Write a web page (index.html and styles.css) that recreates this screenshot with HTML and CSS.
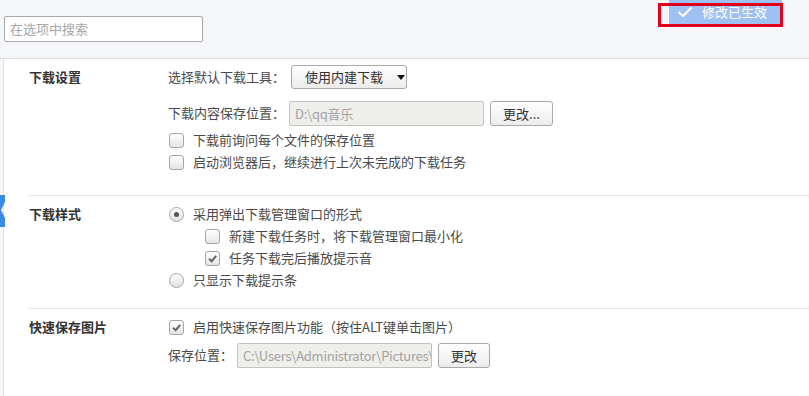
FILE: index.html
```html
<!DOCTYPE html>
<html lang="zh-CN">
<head>
<meta charset="utf-8">
<title>下载设置</title>
<link rel="stylesheet" href="styles.css">
</head>
<body>
<div class="topbar">
  <div class="search">在选项中搜索</div>
</div>
<div class="toast">
  <svg class="toast-check" width="16" height="12" viewBox="0 0 16 12"><path d="M1.5 6 L6 10 L14.5 1.5" fill="none" stroke="#fff" stroke-width="2.2"/></svg>
  <span>修改已生效</span>
</div>
<div class="redframe"></div>

<div class="main">
  <div class="sidebar">
    <svg class="indicator" width="6" height="32" viewBox="0 0 6 32"><path d="M0 0 H5 V7 L1 15 L5 23 V32 H0 Z" fill="#3b8be6"/></svg>
  </div>
  <div class="content">
    <div class="section s1">
      <div class="label">下载设置</div>
      <div class="body">
        <div class="row r24">
          <span>选择默认下载工具<span class="p">：</span></span>
          <span class="select">使用内建下载<i class="caret"></i></span>
        </div>
        <div class="row r26 gap11">
          <span>下载内容保存位置<span class="p">：</span></span>
          <span class="field f1">D:\qq音乐</span>
          <span class="btn b1">更改...</span>
        </div>
        <div class="row gap3"><span class="cb"></span><span>下载前询问每个文件的保存位置</span></div>
        <div class="row"><span class="cb"></span><span>启动浏览器后<span class="p">，</span>继续进行上次未完成的下载任务</span></div>
      </div>
    </div>

    <div class="section s2">
      <div class="label">下载样式</div>
      <div class="body">
        <div class="row"><span class="radio on"></span><span>采用弹出下载管理窗口的形式</span></div>
        <div class="row sub"><span class="cb"></span><span>新建下载任务时<span class="p">，</span>将下载管理窗口最小化</span></div>
        <div class="row sub"><span class="cb on"><svg width="13" height="13" viewBox="0 0 13 13"><path d="M3 6.8 L5.6 9.2 L10.2 3.8" fill="none" stroke="#666" stroke-width="2"/></svg></span><span>任务下载完后播放提示音</span></div>
        <div class="row"><span class="radio"></span><span>只显示下载提示条</span></div>
      </div>
    </div>

    <div class="section s3">
      <div class="label">快速保存图片</div>
      <div class="body">
        <div class="row"><span class="cb on"><svg width="13" height="13" viewBox="0 0 13 13"><path d="M3 6.8 L5.6 9.2 L10.2 3.8" fill="none" stroke="#666" stroke-width="2"/></svg></span><span>启用快速保存图片功能<span class="p">（</span>按住ALT键单击图片<span class="p">）</span></span></div>
        <div class="row r26 gap4">
          <span>保存位置<span class="p">：</span></span>
          <span class="field f2">C:\Users\Administrator\Pictures\</span>
          <span class="btn b2">更改</span>
        </div>
      </div>
    </div>
  </div>
</div>
</body>
</html>
```

FILE: styles.css
```css
html, body {
  margin: 0;
  padding: 0;
  background: #fff;
}
body {
  font-family: "Noto Sans CJK SC", "Microsoft YaHei", sans-serif;
  font-size: 13px;
  color: #4a4a4a;
  line-height: 22px;
  overflow: hidden;
  height: 396px;
}
.p {
  font-family: "Noto Sans CJK TC", "Noto Sans CJK SC", sans-serif;
}

.topbar {
  height: 59px;
  box-sizing: border-box;
  background: #f5f6fa;
  border-bottom: 1px solid #dadbdf;
  padding: 16px 0 0 4px;
}
.search {
  width: 199px;
  height: 26px;
  box-sizing: border-box;
  border: 1px solid #a9a9ab;
  border-radius: 2px;
  background: #fff;
  color: #a8a8a8;
  padding-left: 5px;
  line-height: 24px;
}

.toast {
  position: absolute;
  left: 669px;
  top: 0;
  width: 113px;
  height: 24px;
  background: #9fc0f3;
  color: #fff;
  display: flex;
  align-items: center;
  box-sizing: border-box;
  padding-left: 8px;
}
.toast-check {
  margin-right: 9px;
}
.redframe {
  position: absolute;
  left: 658px;
  top: 3px;
  width: 125px;
  height: 24px;
  box-sizing: border-box;
  border: 3px solid #e0001b;
}

.main {
  display: flex;
  height: 337px;
}
.sidebar {
  width: 3px;
  background: #f5f6fa;
  border-right: 1px solid #e3e4e8;
  position: relative;
}
.indicator {
  position: absolute;
  left: 0;
  top: 136px;
}
.content {
  flex: 1;
}

.section {
  display: flex;
  margin-left: 25px;
}
.s1 {
  padding: 6px 0 22px;
  border-bottom: 1px solid #e8e8e8;
}
.s2 {
  padding: 7px 0 17px;
  border-bottom: 1px solid #e8e8e8;
}
.s3 {
  padding: 7px 0 0;
}
.label {
  width: 139px;
  font-weight: bold;
  color: #333;
  line-height: 22px;
}
.s1 .label {
  line-height: 24px;
}
.body {
  flex: 1;
}

.row {
  display: flex;
  align-items: center;
  height: 22px;
  white-space: nowrap;
}
.r24 { height: 24px; }
.r26 { height: 26px; }
.gap11 { margin-top: 11px; }
.gap3 { margin-top: 3px; }
.gap4 { margin-top: 4px; }
.sub { padding-left: 36px; }

.select {
  display: inline-flex;
  align-items: center;
  box-sizing: border-box;
  height: 24px;
  width: 116px;
  margin-left: 6px;
  padding-left: 13px;
  border: 1px solid #a9a9a9;
  border-radius: 3px;
  background: linear-gradient(#ffffff, #ececec);
  color: #333;
}
.caret {
  width: 0;
  height: 0;
  margin-left: 14px;
  border-left: 4px solid transparent;
  border-right: 4px solid transparent;
  border-top: 5px solid #111;
}

.field {
  display: inline-block;
  box-sizing: border-box;
  height: 25px;
  line-height: 23px;
  border: 1px solid #c3c3c3;
  border-radius: 2px;
  background: #eeeeea;
  color: #a3a3a3;
  padding-left: 5px;
  overflow: hidden;
  margin-left: 4px;
  letter-spacing: -0.25px;
}
.f1 { width: 195px; }
.f2 { width: 195px; }

.btn {
  display: inline-block;
  box-sizing: border-box;
  height: 25px;
  line-height: 23px;
  border: 1px solid #a9a9a9;
  border-radius: 3px;
  background: linear-gradient(#ffffff, #ececec);
  color: #333;
  text-align: center;
  margin-left: 6px;
}
.b1 { width: 63px; }
.b2 { width: 52px; }

.cb {
  display: inline-block;
  box-sizing: border-box;
  width: 15px;
  height: 15px;
  border: 1px solid #a6a6a6;
  border-radius: 3px;
  background: linear-gradient(#ffffff, #e4e4e4);
  margin: 0 9px 0 1px;
  position: relative;
}
.cb svg {
  display: block;
  margin: 0;
}
.radio {
  display: inline-block;
  box-sizing: border-box;
  width: 15px;
  height: 15px;
  border: 1px solid #a6a6a6;
  border-radius: 50%;
  background: linear-gradient(#ffffff, #e2e2e2);
  margin: 0 9px 0 1px;
  position: relative;
}
.radio.on::after {
  content: "";
  position: absolute;
  left: 4px;
  top: 4px;
  width: 5px;
  height: 5px;
  border-radius: 50%;
  background: #555;
}
```
